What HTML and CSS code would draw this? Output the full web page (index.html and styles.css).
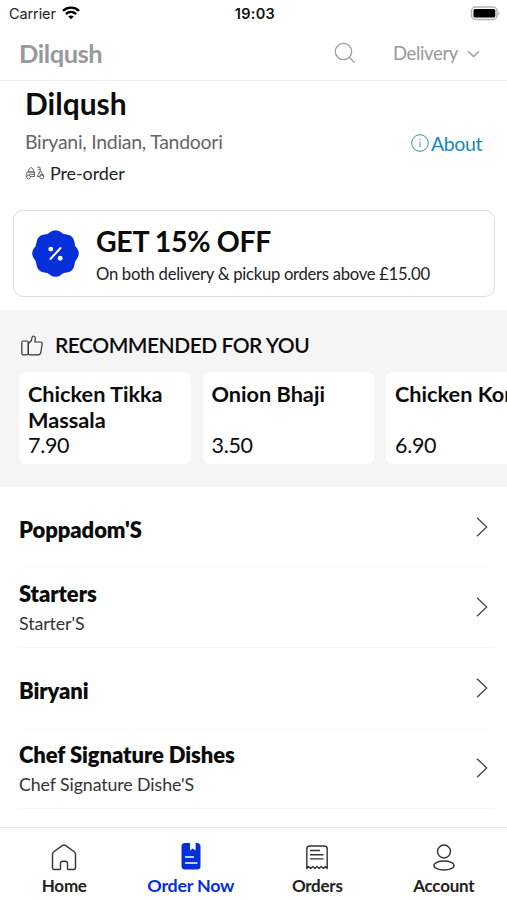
FILE: index.html
```html
<!DOCTYPE html>
<html lang="en">
<head>
<meta charset="utf-8">
<title>Dilqush</title>
<link rel="stylesheet" href="styles.css">
</head>
<body>
<div class="status">
  <div class="carrier"><span>Carrier</span>
    <svg width="18" height="14" viewBox="0 0 18 14" fill="none" stroke="#000" stroke-width="2.4"><path d="M1 4.8C5.5.6 12.500.6 17 4.800"/><path d="M3.900 8C7 5.200 11 5.200 14.100 8"/><path d="M9 13.300 6.200 10.500Q9 8.400 11.800 10.500Z" fill="#000" stroke="none"/></svg>
  </div>
  <div class="clock">19:03</div>
  <svg class="battery" width="31" height="15" viewBox="0 0 31 15"><rect x="1.500" y="1" width="25.500" height="12.500" rx="4" fill="#fff" stroke="#b5b5b5" stroke-width="1.500"/><rect x="3.500" y="3" width="21.800" height="8.600" rx="1.500"/><path d="M28.500 5Q30.500 7.300 28.500 9.500Z" fill="#aaa"/></svg>
</div>
<header class="topbar">
  <span class="brand">Dilqush</span>
  <svg class="search" width="22" height="22" viewBox="0 0 22 22" fill="none" stroke="#999" stroke-width="1.200"><circle cx="9.500" cy="9.500" r="8.200"/><path d="M15.300 15.300 20.500 20.500"/></svg>
  <span class="mode">Delivery</span>
  <svg class="caret" width="13" height="8" viewBox="0 0 13 8" fill="none" stroke="#999" stroke-width="1.300"><path d="M1 1.300 6.500 6.500 12 1.300"/></svg>
</header>
<main>
  <section class="info">
    <h1><span>Dilqush</span></h1>
    <p class="cuisine"><span>Biryani, Indian, Tandoori</span></p>
    <p class="pre">
      <svg width="20" height="14" viewBox="0 0 20 14" fill="none" stroke="#666" stroke-width="1"><path d="M3.300 6 4.200 2.800Q6 .2 7.900 2.800L9 6ZM2.200 6H9.500V10.500H5.600M1 10.700Q.8 8.300 2.400 6M3.500 8.300H9.500M12.300 1.200H14.800L15.500 4.500 12.200 10.500H14.700M12.800 3.700H15.200M14 7.500 15.500 5 18 8.800M14.700 10.500Q14.800 8.300 16.800 8.300 18.800 8.500 19 10.500"/><circle cx="3.500" cy="11" r="1.900"/><circle cx="16.700" cy="11" r="1.900"/></svg>
      <span>Pre-order</span></p>
    <a class="about"><svg width="18" height="18" viewBox="0 0 18 18" fill="none" stroke="#2b94bd"><circle cx="9" cy="9" r="8.300"/><path d="M9 7.500V13M9 4.800V6.100"/></svg><span>About</span></a>
  </section>
  <section class="offer">
    <svg width="50" height="50" viewBox="-25 -25 50 50"><path fill="#0530d9" stroke="#0530d9" stroke-width="2" stroke-linejoin="round" d="M-5-21Q0-24.500 5-21 7.500-18.500 11.300-18.400 17.500-17.500 18.400-11.300 18.500-7.500 21-5 24.500 0 21 5 18.500 7.500 18.400 11.300 17.500 17.500 11.300 18.400 7.500 18.500 5 21 0 24.500-5 21-7.500 18.500-11.300 18.400-17.500 17.500-18.400 11.300-18.500 7.500-21 5-24.500 0-21-5-18.500-7.500-18.400-11.300-17.500-17.500-11.300-18.400-7.500-18.500-5-21Z"/><path d="M-5 5.500 5-5.500" stroke="#fff" stroke-width="2.200" stroke-linecap="round"/><circle cx="-4.800" cy="-4.500" r="2.500" fill="#fff"/><circle cx="4.800" cy="4.800" r="2.500" fill="#fff"/></svg>
    <div><h2><span>GET 15% OFF</span></h2><p><span>On both delivery &amp; pickup orders above £15.00</span></p></div>
  </section>
  <section class="recommended">
    <h3><svg width="22" height="21" viewBox="0 0 22 21" fill="none" stroke="#333" stroke-width="1.200" stroke-linejoin="round"><rect x=".8" y="6" width="6.500" height="13.800" rx="1.500"/><path d="M7.300 8.500 10.500 5.500 11 2.500Q11.300.8 12.800 1 14.500 1.300 14.300 3.500L13.800 7H19.500Q21.500 7.200 21.200 9L19.800 17.500Q19.200 19.800 17 19.800H9Q7.300 19.800 7.300 18Z"/></svg><span>RECOMMENDED FOR YOU</span></h3>
    <div class="cards">
      <article><h4>Chicken Tikka Massala</h4><p>7.90</p></article>
      <article><h4>Onion Bhaji</h4><p>3.50</p></article>
      <article><h4>Chicken Korma</h4><p>6.90</p></article>
    </div>
  </section>
  <section class="menu">
    <div class="row"><div><h5>Poppadom'S</h5></div><svg class="chev" viewBox="0 0 12 20"><path d="M1 .7 10.700 10 1 19.300"/></svg></div>
    <div class="row detailed"><div><h5>Starters</h5><p>Starter'S</p></div><svg class="chev" viewBox="0 0 12 20"><path d="M1 .7 10.700 10 1 19.300"/></svg></div>
    <div class="row"><div><h5>Biryani</h5></div><svg class="chev" viewBox="0 0 12 20"><path d="M1 .7 10.700 10 1 19.300"/></svg></div>
    <div class="row detailed"><div><h5>Chef Signature Dishes</h5><p>Chef Signature Dishe'S</p></div><svg class="chev" viewBox="0 0 12 20"><path d="M1 .7 10.700 10 1 19.300"/></svg></div>
  </section>
</main>
<nav>
  <a><svg width="26" height="28" viewBox="0 0 26 28" fill="none" stroke="#333" stroke-width="1.400" stroke-linejoin="round"><path d="M1.500 11Q1.500 9.800 2.500 9L11.500 2.400Q13 1.300 14.500 2.400L23.500 9Q24.500 9.800 24.500 11V24.500Q24.500 26.500 22.500 26.500H17.500Q16.500 26.500 16.500 25.500V20.500Q16.500 18.300 14.500 18.300H11.500Q9.500 18.300 9.500 20.500V25.500Q9.500 26.500 8.500 26.500H3.500Q1.500 26.500 1.500 24.500Z"/></svg><span>Home</span></a>
  <a class="active"><svg width="20" height="28" viewBox="0 0 20 28"><path fill="#0530d9" d="M4 0H9V7.500L11.800 5.500 14.600 7.500V0H16Q19.500 0 19.500 3.500V23Q19.500 26.500 16 26.500H4Q.5 26.500.5 23V3.500Q.5 0 4 0Z"/><path d="M4.500 14H12.500M4.500 20H16" stroke="#fff" stroke-width="1.300" stroke-linecap="round"/></svg><span>Order Now</span></a>
  <a><svg width="22" height="28" viewBox="0 0 22 28" fill="none" stroke="#333" stroke-width="1.400" stroke-linejoin="round"><path d="M.8 25.500V6Q.8 3 3.800 3H18.200Q21.200 3 21.200 6V25.500L19.500 23.500 17.400 25.500 15.300 23.500 13.100 25.500 11 23.500 8.900 25.500 6.700 23.500 4.600 25.500 2.500 23.500Z"/><path d="M4 7.500H14M4 11.700H17.500M4 15.900H17.500"/></svg><span>Orders</span></a>
  <a><svg width="22" height="28" viewBox="0 0 22 28" fill="none" stroke="#333" stroke-width="1.400"><circle cx="11" cy="8.500" r="6.500"/><ellipse cx="11" cy="22.500" rx="10.100" ry="4.500"/></svg><span>Account</span></a>
</nav>
</body>
</html>
```
FILE: styles.css
```css
* { box-sizing: border-box; }
body { margin: 0; height: 900px; display: flex; flex-direction: column; overflow: hidden; background: #fff; color: #0c0c0c; font-family: Lato, "Liberation Sans", sans-serif; }
h1, h2, h3, h4, h5, p { margin: 0; }
svg { display: block; flex: none; }
span { white-space: nowrap; }
.status { height: 27px; display: grid; grid-template-columns: 1fr auto 1fr; align-items: center; padding: 0 6px 0 9px; font-family: Inter, sans-serif; font-size: 14.500px; color: #222; }
.carrier { display: flex; align-items: center; gap: 6px; letter-spacing: -.1px; }
.carrier svg { margin-top: -2px; }
.clock { font-weight: 600; letter-spacing: .3px; color: #111; }
.battery { justify-self: end; }
.topbar { height: 54px; display: flex; align-items: center; padding: 0 27px 2px 19px; border-bottom: 1px solid #ededed; color: #999; }
.brand { font-size: 25.500px; font-weight: 700; letter-spacing: -.45px; flex: 1; }
.mode { font-size: 18.500px; letter-spacing: -.35px; margin: 0 9px 0 37px; }
.caret { margin-top: 3px; }
main { flex: 1; min-height: 0; overflow: hidden; }
.info { height: 129px; display: grid; grid-template-columns: 1fr auto; grid-template-rows: 46px 28px 35px; align-items: center; padding: 0 25px; }
h1 { font-size: 30px; line-height: 44px; padding-bottom: 2px; font-weight: 700; }
.info > * { grid-column: 1; }
.cuisine { font-size: 19.500px; letter-spacing: -.28px; color: #666; }
.pre { font-size: 18px; letter-spacing: -.1px; display: flex; align-items: center; gap: 5px; color: #222; }
.info .about { grid-column: 2; grid-row: 2; display: flex; align-items: center; gap: 2px; font-size: 19.500px; letter-spacing: -.4px; color: #1688b6; padding-top: 4px; }
.offer { height: 87px; margin: 0 12px 13px 13px; border: 1px solid #ddd; border-radius: 10px; display: flex; align-items: center; gap: 15px; padding-left: 17px; }
.offer svg { width: 49px; height: 49px; margin: -1px 1px 0 0; }
.offer h2 { font-size: 28.500px; letter-spacing: -.35px; line-height: 34px; margin-top: 2px; }
.offer p { font-size: 16.700px; letter-spacing: -.3px; line-height: 24px; margin-top: 4px; color: #222; }
.recommended { height: 177px; background: #f5f5f5; padding: 22px 0 0 19px; overflow: hidden; }
h3 { height: 26px; display: flex; align-items: center; gap: 12px; padding-left: 2px; font-size: 21px; letter-spacing: -.5px; font-weight: 600; }
h3 span { padding-bottom: 2px; }
.cards { display: flex; gap: 12px; margin-top: 14px; }
article { flex: none; width: 171.500px; height: 92px; background: #fff; border-radius: 7px; padding: 10px 9px; line-height: 25.500px; font-size: 21.500px; letter-spacing: -.3px; }
h4 { height: 51px; font-size: 21.700px; letter-spacing: 0; font-weight: 700; }
.menu { padding: 0 13px 0 19px; }
.row { height: 80.500px; display: flex; align-items: center; justify-content: space-between; border-bottom: 1px solid #fdfdfd; padding-right: 6px; }
.row.detailed { border-bottom-color: #f7f7f7; }
h5 { font-size: 22px; line-height: 28px; font-weight: 800; letter-spacing: -.08px; padding-top: 7px; }
.detailed h5 { padding-top: 0; }
.row p { font-size: 17.800px; letter-spacing: -.1px; line-height: 24px; margin-top: 3px; color: #333; }
.chev { width: 12px; height: 20px; fill: none; stroke: #444; stroke-width: 1.300; }
nav { height: 73px; border-top: 1px solid #e8e8e8; background: #fff; display: grid; grid-template-columns: repeat(4, 1fr); padding-left: 1px; }
nav a { display: flex; flex-direction: column; align-items: center; padding-top: 15px; gap: 4px; font-size: 17px; letter-spacing: -.25px; line-height: 22px; font-weight: 700; color: #222; }
nav .active { color: #0530d9; font-size: 17.900px; gap: 3px; }
```
